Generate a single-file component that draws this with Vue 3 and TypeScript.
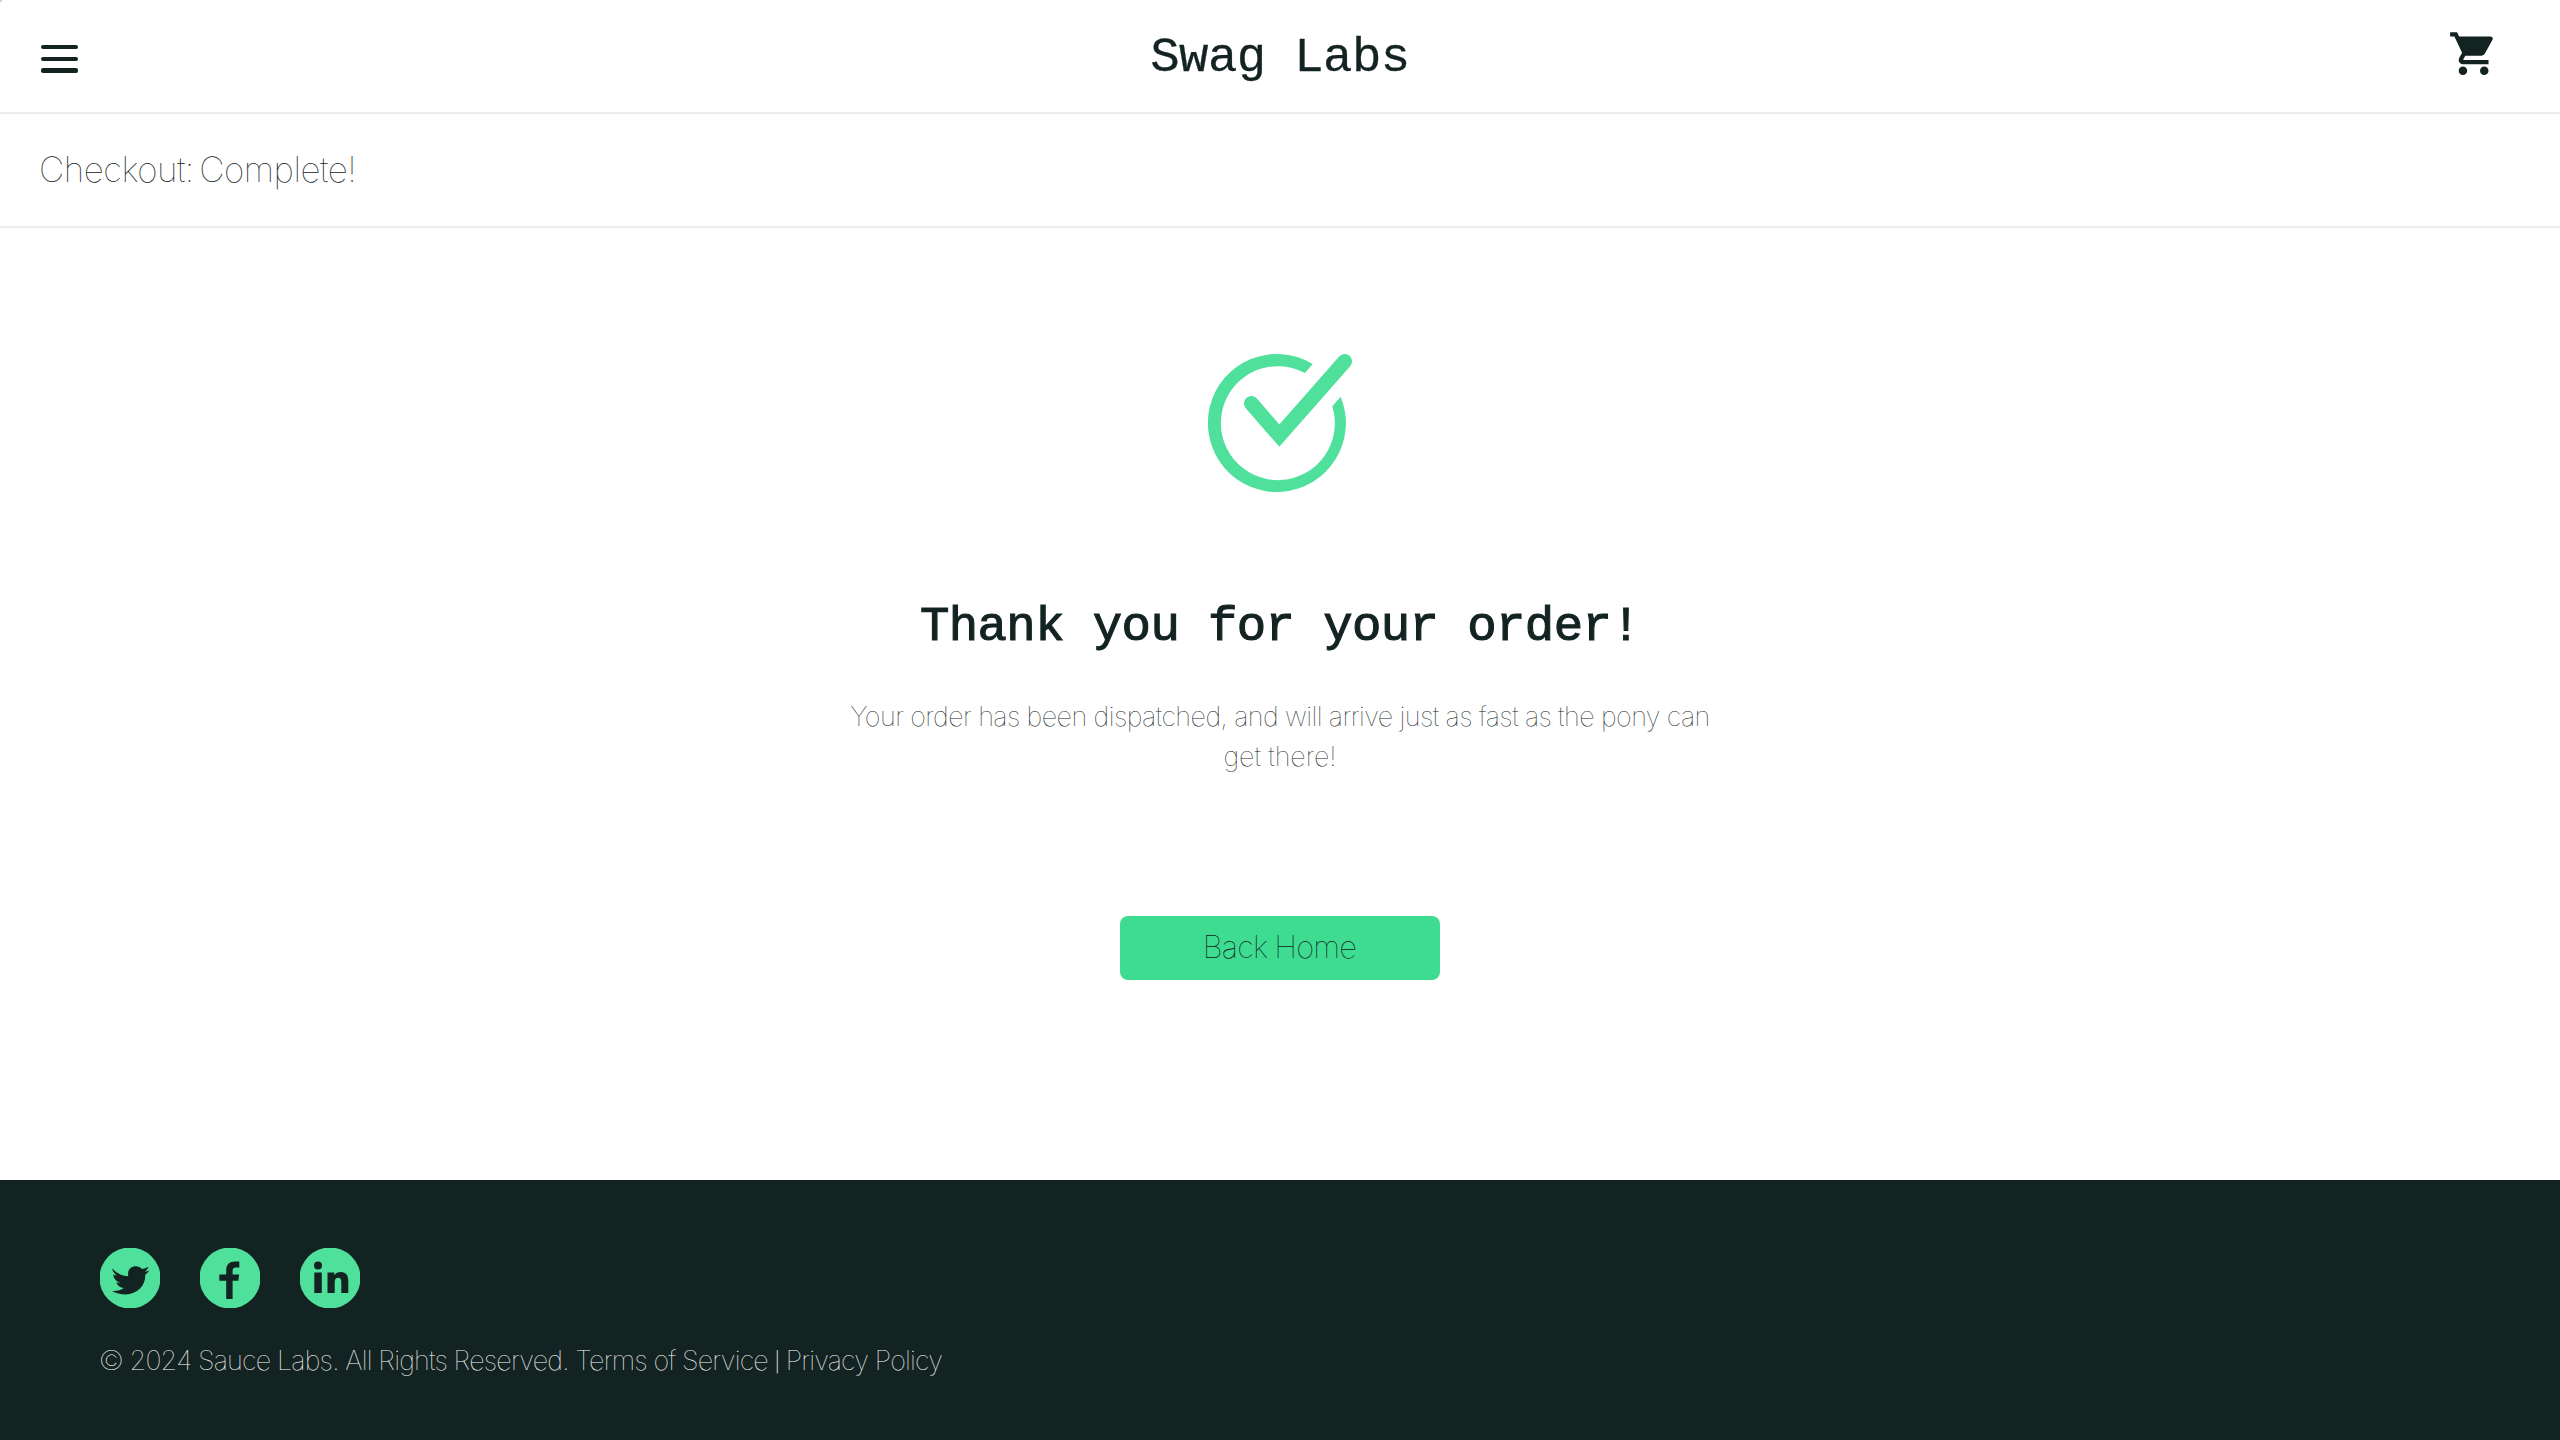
<script setup lang="ts">
interface Social {
  name: string
  path: string
}

const socials: Social[] = [
  {
    name: 'Twitter',
    path: 'M12.4 20.6C16.5 25.4 22 28 28.3 28.2C27 22.500 30.500 18.300 35.500 18.300C38.300 18.300 40.300 19.300 42 21C44.300 20.600 46.500 19.800 48.400 18.700C47.700 21 46.300 22.600 44.700 23.700C46.500 23.500 48 23.100 49.400 22.500C48.300 24.200 46.900 25.700 45.300 26.800C45.700 37.500 37.500 46.400 25.500 46.400C20.500 46.400 16 45.300 12 43C17 43.300 21 42.100 23.800 40C20 39.700 17.300 37.500 16.300 34.500C17.600 34.700 18.800 34.700 20 34.400C16 33.300 13.400 30.200 13.300 26.500C14.500 27.100 15.700 27.400 17 27.500C13 24.500 12.200 21.500 12.400 20.600Z',
  },
  {
    name: 'Facebook',
    path: 'M26.200 51V32.800H19.300V26.500H26.200V22.500C26.200 16.500 29.500 13.500 35 13.500H39.300V19.600H36C33.300 19.600 32.600 20.800 32.600 23V26.500H39.200L38.300 32.800H32.600V51Z',
  },
  {
    name: 'LinkedIn',
    path: 'M18 13.400a4 4 0 1 1 0 8a4 4 0 1 1 0-8ZM14.300 24.500H21.800V45H14.300ZM27.500 24.500H34.300V27.300C35.600 25.200 38 24 40.800 24C46.300 24 48.300 27.500 48.300 33.500V45H41.300V34.500C41.300 31.500 40.700 29.800 38.200 29.800C35.600 29.800 34.700 31.700 34.700 34.500V45H27.500Z',
  },
]
</script>

<template>
  <div class="page">
    <header class="primary">
      <button class="menu" aria-label="Open Menu"><i></i><i></i><i></i></button>
      <div class="logo">Swag Labs</div>
      <svg class="cart" viewBox="0 0 24 24" fill="#132322">
        <path d="M7 18c-1.100 0-1.990.900-1.990 2S5.900 22 7 22s2-.900 2-2-.900-2-2-2zM1 2v2h2l3.600 7.590-1.350 2.450c-.160.280-.250.610-.250.960 0 1.100.900 2 2 2h12v-2H7.420c-.140 0-.250-.110-.250-.250l.030-.120.900-1.630h7.450c.750 0 1.410-.410 1.750-1.030l3.580-6.490c.080-.140.120-.310.120-.480 0-.550-.450-1-1-1H5.210l-.940-2H1zm16 16c-1.100 0-1.990.900-1.990 2s.890 2 1.990 2 2-.900 2-2-.900-2-2-2z" />
      </svg>
    </header>
    <div class="secondary"><span class="title">Checkout: Complete!</span></div>
    <main>
      <svg class="check" viewBox="54 72 432 414">
        <path d="M368 102A207 207 0 1 0 452 200L427 229A171 171 0 1 1 345 129Z" fill="#4fe19b" />
        <path d="M184 220L268 317L464 94" fill="none" stroke="#4fe19b" stroke-width="44" stroke-linecap="round" />
      </svg>
      <h2>Thank you for your order!</h2>
      <div class="text">
        <span class="line1">Your order has been dispatched, and will arrive just as fast as the pony can</span>
        <br />
        <span class="line2">get there!</span>
      </div>
      <button class="home">Back Home</button>
    </main>
    <footer>
      <ul>
        <li v-for="s in socials" :key="s.name">
          <svg viewBox="0 0 60 60" :aria-label="s.name">
            <circle cx="30" cy="30" r="30.500" fill="#4fe19b" />
            <path :d="s.path" fill="#132322" />
          </svg>
        </li>
      </ul>
      <div class="copy">© 2024 Sauce Labs. All Rights Reserved. Terms of Service <span class="bar">|</span> Privacy Policy</div>
    </footer>
  </div>
</template>

<style>
body {
  background: #fff;
}
</style>

<style scoped>
.page {
  width: 2560px;
  height: 1440px;
  display: flex;
  flex-direction: column;
  overflow: hidden;
  color: #132322;
  font-family: Inter, sans-serif;
  font-weight: 100;
}
.page * {
  box-sizing: border-box;
}
button {
  border: 0;
  padding: 0;
  color: inherit;
  font: inherit;
}
.primary {
  height: 114px;
  border-bottom: 2px solid #ededed;
  display: flex;
  justify-content: space-between;
  align-items: flex-start;
  padding: 0 61px 0 41px;
  flex: none;
  background: linear-gradient(#d3d3d3, #d3d3d3) 0 0 / 2px 2px no-repeat;
}
.menu {
  width: 51px;
  margin-top: 45px;
  background: none;
  display: flex;
  flex-direction: column;
  gap: 7.500px;
}
.menu i {
  width: 37px;
  height: 4.200px;
  border-radius: 2px;
  background: #132322;
}
.logo {
  font: 400 49px/60px 'Liberation Mono', monospace;
  letter-spacing: -0.600px;
  -webkit-text-stroke: 0.300px #132322;
  margin-top: 28px;
  padding-left: 20px;
}
.cart {
  width: 51.200px;
  height: 51.200px;
  margin-top: 28px;
}
.secondary {
  height: 114px;
  border-bottom: 2px solid #ededed;
  padding: 31px 0 0 39px;
  flex: none;
}
.title {
  font-size: 35px;
  line-height: 48px;
  letter-spacing: -0.500px;
  word-spacing: -4px;
}
main {
  height: 952px;
  flex: none;
  display: flex;
  flex-direction: column;
  align-items: center;
}
.check {
  width: 144px;
  height: 138px;
  margin-top: 126px;
}
h2 {
  font: 400 49px/60px 'Liberation Mono', monospace;
  letter-spacing: -0.600px;
  -webkit-text-stroke: 1.100px #132322;
  margin: 105px 0 0;
}
.text {
  margin-top: 40px;
  font-size: 27px;
  line-height: 40px;
  text-align: center;
}
.line1 {
  letter-spacing: -0.560px;
  word-spacing: -0.200px;
}
.line2 {
  letter-spacing: -0.100px;
}
.home {
  width: 320px;
  height: 64px;
  margin-top: 139px;
  padding: 0 1px 3px 0;
  border-radius: 8px;
  background: #3ddc91;
  font-size: 31px;
  letter-spacing: -0.800px;
  word-spacing: -1px;
}
footer {
  flex: 1;
  background: #132322;
  color: #fff;
  padding: 68px 100px 0;
}
ul {
  display: flex;
  gap: 40px;
  list-style: none;
  margin: 0;
  padding: 0;
}
li,
li svg {
  display: block;
  width: 60px;
  height: 60px;
}
.copy {
  margin: 33px 0 0 -1px;
  font-size: 27px;
  line-height: 40px;
  letter-spacing: -0.800px;
  word-spacing: -0.200px;
}
.bar {
  font-family: Roboto, sans-serif;
  font-size: 27px;
}
</style>
